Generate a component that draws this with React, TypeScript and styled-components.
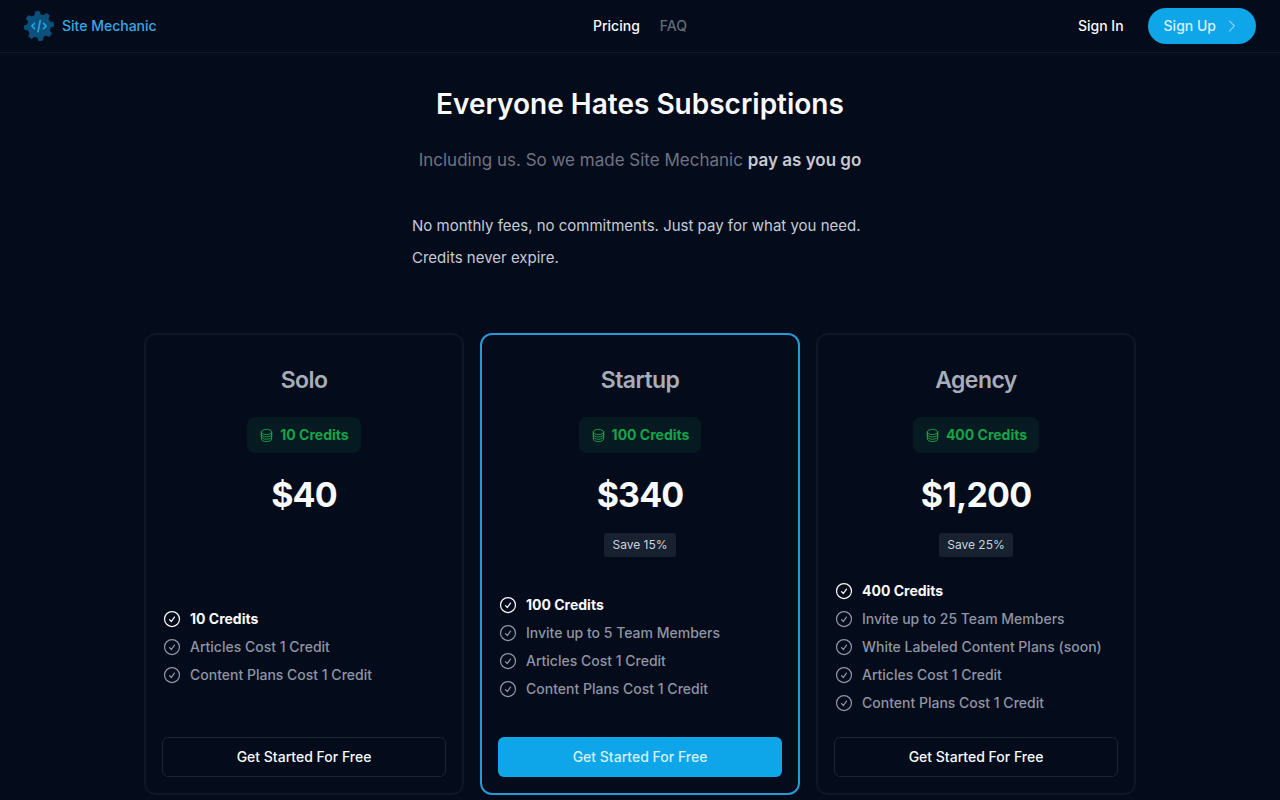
import React from "react";
import styled, { createGlobalStyle, css } from "styled-components";
import {
  HiOutlineCheckCircle,
  HiOutlineChevronRight,
  HiOutlineCircleStack,
} from "react-icons/hi2";

const GlobalStyle = createGlobalStyle`
  *, *::before, *::after { box-sizing: border-box; }
  body {
    margin: 0;
    background: #040b1a;
    color: #f8fafc;
    font-family: Inter, "Liberation Sans", sans-serif;
    font-size: 14px;
    line-height: 20px;
    -webkit-font-smoothing: antialiased;
  }
  h1, h2, p, ul { margin: 0; padding: 0; }
  a { color: inherit; text-decoration: none; }
  button { font: inherit; cursor: pointer; }
`;

const Header = styled.header`
  display: grid;
  grid-template-columns: 1fr auto 1fr;
  align-items: center;
  padding: 8px 24px;
  border-bottom: 1px solid #111927;
  font-weight: 500;
`;

const Brand = styled.a`
  display: flex;
  align-items: center;
  gap: 8px;
  color: #38a9e4;
`;

const Nav = styled.nav`
  display: flex;
  gap: 20px;
`;

const NavLink = styled.a<{ $muted?: boolean }>`
  color: ${(p) => (p.$muted ? "#636a79" : "#f8fafc")};
`;

const Account = styled.div`
  display: flex;
  justify-content: flex-end;
  align-items: center;
  gap: 24px;
`;

const SignUp = styled.a`
  display: flex;
  align-items: center;
  gap: 8px;
  height: 36px;
  padding: 0 16px;
  border-radius: 18px;
  background: #0fa5e9;
  color: #d5f1fd;
`;

const Main = styled.main`
  display: flex;
  flex-direction: column;
  align-items: center;
  padding: 32px 16px 5px;
`;

const Title = styled.h1`
  font-size: 28px;
  line-height: 38px;
  font-weight: 600;
  text-align: center;
`;

const Subtitle = styled.p`
  margin-top: 21px;
  font-size: 17px;
  line-height: 32px;
  color: #6d7483;
  text-align: center;

  strong {
    font-weight: 600;
    color: #c5cad3;
  }
`;

const Intro = styled.p`
  width: 100%;
  max-width: 456px;
  margin-top: 34px;
  font-size: 15px;
  line-height: 32px;
  color: #c5cbd6;
`;

const Plans = styled.section`
  display: grid;
  grid-template-columns: repeat(3, 1fr);
  gap: 16px;
  width: 100%;
  max-width: 992px;
  margin-top: 59px;
`;

const Card = styled.article<{ $featured?: boolean }>`
  display: flex;
  flex-direction: column;
  align-items: center;
  padding: 28px 16px 16px;
  border: 2px solid ${(p) => (p.$featured ? "#2499d6" : "#0f1725")};
  border-radius: 12px;
`;

const PlanName = styled.h2`
  font-size: 23px;
  line-height: 34px;
  font-weight: 600;
  letter-spacing: -0.025em;
  color: #a7adb9;
`;

const CreditBadge = styled.span`
  display: flex;
  align-items: center;
  gap: 6px;
  height: 36px;
  margin-top: 20px;
  padding: 0 12px;
  border-radius: 8px;
  background: #051b21;
  color: #17a34a;
  font-weight: 700;
`;

const Price = styled.p`
  margin-top: 20px;
  font-size: 34px;
  line-height: 44px;
  font-weight: 700;
  letter-spacing: -0.025em;
`;

const SavingSlot = styled.div`
  height: 24px;
  margin-top: 16px;
`;

const Saving = styled.span`
  display: block;
  padding: 0 8px;
  border-radius: 3px;
  background: #172130;
  color: #ced4de;
  font-size: 12px;
  line-height: 24px;
`;

const Features = styled.ul`
  flex: 1;
  display: flex;
  flex-direction: column;
  justify-content: center;
  gap: 8px;
  align-self: stretch;
  margin: 24px 0;
  list-style: none;
`;

const Feature = styled.li<{ $strong?: boolean }>`
  display: flex;
  align-items: center;
  gap: 8px;
  color: ${(p) => (p.$strong ? "#f8fafc" : "#8e95a3")};
  font-weight: ${(p) => (p.$strong ? 700 : 500)};
`;

const CtaButton = styled.button<{ $primary?: boolean }>`
  width: 100%;
  height: 40px;
  border-radius: 6px;
  font-weight: 500;
  ${(p) =>
    p.$primary
      ? css`
          border: 0;
          background: #0fa5e9;
          color: #d5f1fd;
        `
      : css`
          border: 1px solid #1c2432;
          background: transparent;
          color: #f8fafc;
        `}
`;

const GEAR_ANGLES = [0, 45, 90, 135, 180, 225, 270, 315];

function Logo() {
  return (
    <svg width="30" height="30" viewBox="0 0 30 30" aria-hidden="true">
      <g fill="#0b507a" transform="rotate(-7 15 15)">
        <circle cx="15" cy="15" r="11.8" />
        {GEAR_ANGLES.map((a) => (
          <path
            key={a}
            d="M11.2 5 Q12.3 3.4 12.4 1.4 Q12.6 0 13.8 0 H16.2 Q17.4 0 17.6 1.4 Q17.7 3.4 18.8 5 Z"
            transform={`rotate(${a} 15 15)`}
          />
        ))}
      </g>
      <path
        d="M10.5 12.4 L7.8 15 L10.5 17.6 M19.5 12.4 L22.2 15 L19.5 17.6 M16.2 9.6 L14 20.6"
        fill="none"
        stroke="#20a4e6"
        strokeWidth="1.7"
        strokeLinecap="round"
        strokeLinejoin="round"
      />
    </svg>
  );
}

type Plan = {
  name: string;
  credits: string;
  price: string;
  saving?: string;
  featured?: boolean;
  features: string[];
};

const plans: Plan[] = [
  {
    name: "Solo",
    credits: "10 Credits",
    price: "$40",
    features: ["Articles Cost 1 Credit", "Content Plans Cost 1 Credit"],
  },
  {
    name: "Startup",
    credits: "100 Credits",
    price: "$340",
    saving: "Save 15%",
    featured: true,
    features: [
      "Invite up to 5 Team Members",
      "Articles Cost 1 Credit",
      "Content Plans Cost 1 Credit",
    ],
  },
  {
    name: "Agency",
    credits: "400 Credits",
    price: "$1,200",
    saving: "Save 25%",
    features: [
      "Invite up to 25 Team Members",
      "White Labeled Content Plans (soon)",
      "Articles Cost 1 Credit",
      "Content Plans Cost 1 Credit",
    ],
  },
];

function PlanCard({ plan }: { plan: Plan }) {
  return (
    <Card $featured={plan.featured}>
      <PlanName>{plan.name}</PlanName>
      <CreditBadge>
        <HiOutlineCircleStack size={15} />
        {plan.credits}
      </CreditBadge>
      <Price>{plan.price}</Price>
      <SavingSlot>{plan.saving && <Saving>{plan.saving}</Saving>}</SavingSlot>
      <Features>
        <Feature $strong>
          <HiOutlineCheckCircle size={20} />
          {plan.credits}
        </Feature>
        {plan.features.map((f) => (
          <Feature key={f}>
            <HiOutlineCheckCircle size={20} />
            {f}
          </Feature>
        ))}
      </Features>
      <CtaButton type="button" $primary={plan.featured}>
        Get Started For Free
      </CtaButton>
    </Card>
  );
}

export default function App() {
  return (
    <>
      <GlobalStyle />
      <Header>
        <Brand href="#">
          <Logo />
          Site Mechanic
        </Brand>
        <Nav>
          <NavLink href="#pricing">Pricing</NavLink>
          <NavLink href="#faq" $muted>
            FAQ
          </NavLink>
        </Nav>
        <Account>
          <a href="#sign-in">Sign In</a>
          <SignUp href="#sign-up">
            Sign Up
            <HiOutlineChevronRight size={16} />
          </SignUp>
        </Account>
      </Header>
      <Main>
        <Title>Everyone Hates Subscriptions</Title>
        <Subtitle>
          Including us. So we made Site Mechanic <strong>pay as you go</strong>
        </Subtitle>
        <Intro>
          No monthly fees, no commitments. Just pay for what you need.
          <br />
          Credits never expire.
        </Intro>
        <Plans id="pricing">
          {plans.map((p) => (
            <PlanCard key={p.name} plan={p} />
          ))}
        </Plans>
      </Main>
    </>
  );
}
